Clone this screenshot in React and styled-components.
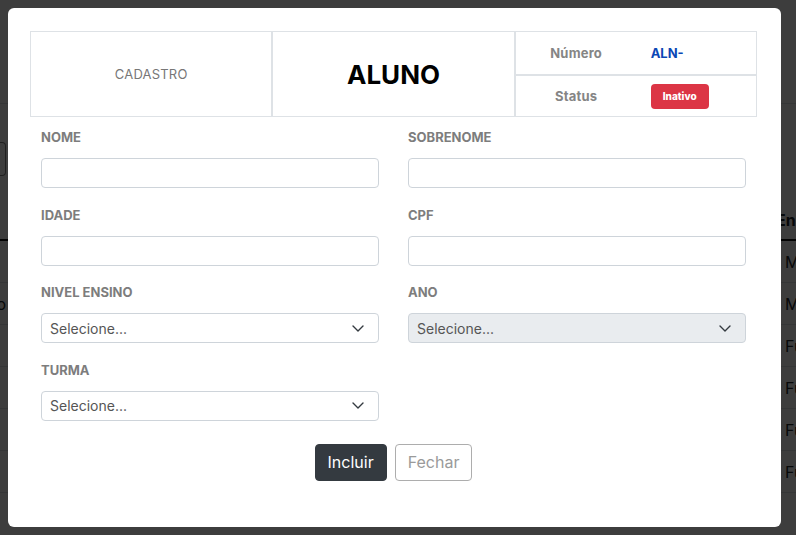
import React from "react";
import styled, { createGlobalStyle } from "styled-components";

const GlobalStyle = createGlobalStyle`
  * { box-sizing: border-box; }
  html, body { margin: 0; padding: 0; background: #fff; }
  body { font-family: "Inter", "Noto Sans", sans-serif; overflow: hidden; }
`;

const Page = styled.div`
  width: 796px;
  height: 535px;
  position: relative;
  overflow: hidden;
  color: #212529;
`;

const TopBar = styled.div`
  height: 104px;
  border-bottom: 1px solid #dee2e6;
`;

const SearchRow = styled.div`
  display: flex;
  margin-top: 38px;
  height: 34px;
`;

const SearchEnd = styled.div`
  width: 6px;
  border: 1px solid #888;
  border-left: none;
  border-radius: 0 4px 4px 0;
`;

const Table = styled.div`
  margin-top: 24px;
  display: grid;
  grid-template-columns: 6px 301px 322px 94px 53px 1fr;
  font-size: 16px;
`;

const HeadCell = styled.div`
  height: 41px;
  display: flex;
  align-items: center;
  font-weight: 700;
  border-bottom: 2px solid #111;
  white-space: nowrap;
  overflow: hidden;
`;

const Cell = styled.div`
  height: 42px;
  display: flex;
  align-items: center;
  padding-left: ${(p) => (p.$end ? "0" : "9px")};
  border-bottom: 1px solid #dee2e6;
  white-space: nowrap;
  overflow: hidden;
  justify-content: ${(p) => (p.$end ? "flex-end" : "flex-start")};
`;

const Backdrop = styled.div`
  position: absolute;
  inset: 0;
  background: rgba(0, 0, 0, 0.76);
  padding: 8px;
  display: flex;
  align-items: flex-start;
`;

const Modal = styled.div`
  width: 773px;
  height: 519px;
  background: #fff;
  border-radius: 6px;
  padding: 23px 24px 46px 22px;
  display: flex;
  flex-direction: column;
`;

const Header = styled.div`
  display: grid;
  grid-template-columns: repeat(3, 1fr);
  height: 86px;
`;

const HeadBox = styled.div`
  border: 1px solid #dee2e6;
  display: flex;
  align-items: center;
  justify-content: center;
`;

const Caption = styled.span`
  font-size: 13px;
  color: #777;
  letter-spacing: 0.2px;
`;

const Title = styled.h1`
  margin: 0;
  font-size: 26px;
  font-weight: 700;
  color: #000;
`;

const InfoCol = styled.div`
  display: grid;
  grid-template-rows: 44px 42px;
`;

const InfoRow = styled.div`
  border: 1px solid #dee2e6;
  display: grid;
  grid-template-columns: 121px 1fr;
  align-items: center;
`;

const InfoLabel = styled.span`
  text-align: center;
  font-size: 13px;
  font-weight: 700;
  color: #858585;
  letter-spacing: 0.2px;
`;

const InfoValue = styled.span`
  padding-left: 14px;
  font-size: 13px;
  font-weight: 700;
  color: #0b47b5;
`;

const Badge = styled.span`
  margin-left: 14px;
  width: 58px;
  height: 25px;
  border-radius: 4px;
  background: #dc3545;
  color: #fff;
  font-size: 10px;
  font-weight: 800;
  display: flex;
  align-items: center;
  justify-content: center;
`;

const Form = styled.div`
  margin-top: 10px;
  padding: 0 11px;
  display: grid;
  grid-template-columns: 338px 338px;
  column-gap: 29px;
  row-gap: 16.6px;
`;

const Field = styled.div`
  display: flex;
  flex-direction: column;
`;

const Label = styled.label`
  font-size: 13px;
  line-height: 20px;
  font-weight: 700;
  color: #7d7d7d;
  margin-bottom: 11px;
`;

const Input = styled.input`
  height: 30px;
  border: 1px solid #ced4da;
  border-radius: 4px;
  background: #fff;
  font: inherit;
  font-size: 14px;
  padding: 0 8px;
  outline: none;
`;

const Select = styled.div`
  height: 30px;
  border: 1px solid #ced4da;
  border-radius: 4px;
  background: ${(p) => (p.$disabled ? "#e9ecef" : "#fff")};
  display: flex;
  align-items: center;
  justify-content: space-between;
  padding: 0 14px 0 8px;
  font-size: 14px;
  color: #555;
`;

const Actions = styled.div`
  margin-top: 23px;
  display: flex;
  justify-content: center;
  gap: 8px;
`;

const Button = styled.button`
  height: 37px;
  padding: 0 12px;
  border-radius: 4px;
  font: inherit;
  font-size: 16px;
  border: 1px solid ${(p) => (p.$outline ? "#adadad" : "#343a40")};
  background: ${(p) => (p.$outline ? "#fff" : "#343a40")};
  color: ${(p) => (p.$outline ? "#9a9a9a" : "#fff")};
`;

const Chevron = () => (
  <svg width="12" height="7" viewBox="0 0 12 7">
    <path d="M1 1l5 5 5-5" fill="none" stroke="#343a40" strokeWidth="1.4" strokeLinecap="round" strokeLinejoin="round" />
  </svg>
);

const rows = ["Médio", "Médio", "Fundamental", "Fundamental", "Fundamental", "Fundamental"];

const Background = () => (
  <>
    <TopBar />
    <SearchRow>
      <SearchEnd />
    </SearchRow>
    <Table>
      <HeadCell />
      <HeadCell />
      <HeadCell />
      <HeadCell />
      <HeadCell />
      <HeadCell>Ensino</HeadCell>
      {rows.map((r, i) => (
        <React.Fragment key={i}>
          <Cell $end>{i === 1 ? "o" : ""}</Cell>
          <Cell />
          <Cell />
          <Cell />
          <Cell />
          <Cell>{r}</Cell>
        </React.Fragment>
      ))}
    </Table>
  </>
);

const TextField = ({ label }) => (
  <Field>
    <Label>{label}</Label>
    <Input />
  </Field>
);

const SelectField = ({ label, disabled }) => (
  <Field>
    <Label>{label}</Label>
    <Select $disabled={disabled}>
      <span>Selecione...</span>
      <Chevron />
    </Select>
  </Field>
);

export default function App() {
  return (
    <Page>
      <GlobalStyle />
      <Background />
      <Backdrop>
        <Modal>
          <Header>
            <HeadBox>
              <Caption>CADASTRO</Caption>
            </HeadBox>
            <HeadBox>
              <Title>ALUNO</Title>
            </HeadBox>
            <InfoCol>
              <InfoRow>
                <InfoLabel>Número</InfoLabel>
                <InfoValue>ALN-</InfoValue>
              </InfoRow>
              <InfoRow>
                <InfoLabel>Status</InfoLabel>
                <Badge>Inativo</Badge>
              </InfoRow>
            </InfoCol>
          </Header>
          <Form>
            <TextField label="NOME" />
            <TextField label="SOBRENOME" />
            <TextField label="IDADE" />
            <TextField label="CPF" />
            <SelectField label="NIVEL ENSINO" />
            <SelectField label="ANO" disabled />
            <SelectField label="TURMA" />
          </Form>
          <Actions>
            <Button>Incluir</Button>
            <Button $outline>Fechar</Button>
          </Actions>
        </Modal>
      </Backdrop>
    </Page>
  );
}
